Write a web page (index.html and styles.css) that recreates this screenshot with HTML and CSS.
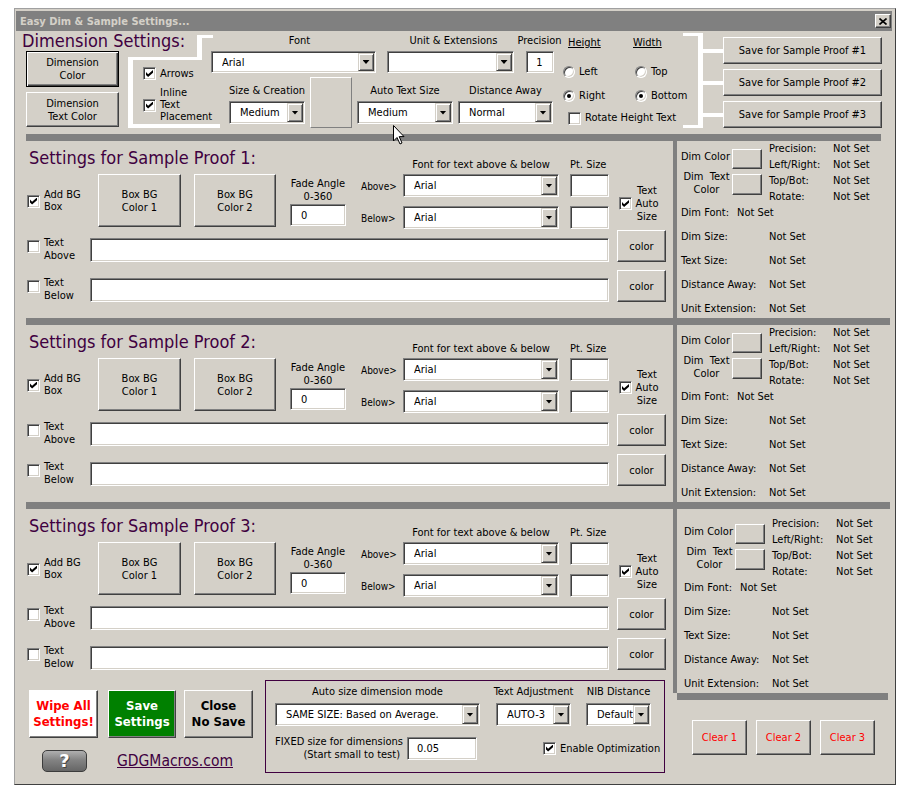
FILE: index.html
```html
<!DOCTYPE html>
<html lang="en">
<head>
<meta charset="UTF-8">
<title>Easy Dim &amp; Sample Settings...</title>
<link rel="stylesheet" href="styles.css">
</head>
<body>
<div class="window">
    <!-- title bar -->
    <div class="titlebar">
        <span class="title">Easy Dim &amp; Sample Settings...</span>
        <span class="btn close-btn"><svg width="8" height="7" viewBox="0 0 8 7"><path d="M0.5 0.5 L7.5 6.5 M7.5 0.5 L0.5 6.5" stroke="#000" stroke-width="1.6"/></svg></span>
    </div>

    <!-- ==========  DIMENSION SETTINGS  ========== -->
    <section class="dim-settings">
        <div class="dim-left">
            <h1 class="heading">Dimension Settings:</h1>
            <div class="dim-left-row">
                <div class="color-btns">
                    <div class="btn btn-def dim-btn">Dimension<br>Color</div>
                    <div class="btn dim-btn2">Dimension<br>Text Color</div>
                </div>
                <div class="check-bracket">
                    <div class="chk chk-arrows"><span class="cb on"></span><span>Arrows</span></div>
                    <div class="chk chk-inline"><span class="cb on"></span><span class="lbl3">Inline<br>Text<br>Placement</span></div>
                </div>
            </div>
        </div>

        <div class="dim-mid">
            <div class="mid-row1">
                <div class="grp font-grp">
                    <div class="hdr">Font</div>
                    <div class="field combo h22"><span class="val">Arial</span><span class="drop"></span></div>
                </div>
                <div class="grp unit-grp">
                    <div class="hdr">Unit &amp; Extensions</div>
                    <div class="field combo h22"><span class="val"></span><span class="drop"></span></div>
                </div>
                <div class="grp prec-grp">
                    <div class="hdr">Precision</div>
                    <div class="field prec-in">1</div>
                </div>
            </div>
            <div class="mid-row2">
                <div class="grp size-grp">
                    <div class="hdr">Size &amp; Creation</div>
                    <div class="field combo h23"><span class="val">Medium</span><span class="drop"></span></div>
                </div>
                <div class="preview-box"></div>
                <div class="grp auto-grp">
                    <div class="hdr">Auto Text Size</div>
                    <div class="field combo h23"><span class="val">Medium</span><span class="drop"></span></div>
                </div>
                <div class="grp dist-grp">
                    <div class="hdr">Distance Away</div>
                    <div class="field combo h23"><span class="val">Normal</span><span class="drop"></span></div>
                </div>
            </div>
        </div>

        <div class="hw">
            <div class="hw-h">Height</div>
            <div class="hw-h hw-w">Width</div>
            <div class="radio r1"><span class="rb"></span>Left</div>
            <div class="radio r1"><span class="rb"></span>Top</div>
            <div class="radio r2"><span class="rb on"></span>Right</div>
            <div class="radio r2"><span class="rb on"></span>Bottom</div>
            <div class="chk rotate"><span class="cb"></span>Rotate Height Text</div>
        </div>

        <div class="save-grp">
            <div class="bracket">
                <div class="btn save-btn">Save for Sample Proof #1</div>
                <div class="btn save-btn">Save for Sample Proof #2</div>
                <div class="btn save-btn">Save for Sample Proof #3</div>
            </div>
        </div>
    </section>

    <div class="bar"></div>

    <!-- ==========  SAMPLE PROOF 1  ========== -->
    <section class="proof">
        <div class="proof-left">
            <div class="proof-head">
                <h2 class="proof-title">Settings for Sample Proof 1:</h2>
                <div class="font-hdr">Font for text above &amp; below</div>
                <div class="pt-hdr">Pt. Size</div>
            </div>
            <div class="proof-ctrl">
                <div class="addbg"><span class="cb on"></span><span class="lbl2">Add BG<br>Box</span></div>
                <div class="btn box-btn">Box BG<br>Color 1</div>
                <div class="btn box-btn box2">Box BG<br>Color 2</div>
                <div class="fade"><div class="fade-lbl">Fade Angle<br>0-360</div><div class="field fade-in">0</div></div>
                <div class="ab-lbls"><span>Above&gt;</span><span>Below&gt;</span></div>
                <div class="ab-combos">
                    <div class="field combo h23"><span class="val">Arial</span><span class="drop"></span></div>
                    <div class="field combo h23"><span class="val">Arial</span><span class="drop"></span></div>
                </div>
                <div class="pt-ins"><div class="field pt-in"></div><div class="field pt-in"></div></div>
                <div class="autosize"><span class="cb on"></span><span class="lbl-c">Text<br>Auto<br>Size</span></div>
            </div>
            <div class="text-row">
                <div class="tchk"><span class="cb"></span><span>Text<br>Above</span></div>
                <div class="field text-in"></div>
                <div class="btn color-btn">color</div>
            </div>
            <div class="text-row">
                <div class="tchk"><span class="cb"></span><span>Text<br>Below</span></div>
                <div class="field text-in"></div>
                <div class="btn color-btn">color</div>
            </div>
        </div>
        <div class="proof-right">
            <div class="rp-top">
                <div class="rp-swatches">
                    <div class="sw-row sw1"><span class="sw-lbl">Dim Color</span><span class="btn swatch"></span></div>
                    <div class="sw-row sw2"><span class="sw-lbl">Dim&nbsp; Text<br>Color</span><span class="btn swatch swatch2"></span></div>
                </div>
                <div class="rp-info">
                    <div><span class="k">Precision:</span>Not Set</div>
                    <div><span class="k">Left/Right:</span>Not Set</div>
                    <div><span class="k">Top/Bot:</span>Not Set</div>
                    <div><span class="k">Rotate:</span>Not Set</div>
                </div>
            </div>
            <div class="rp-font"><span class="k">Dim Font:</span>Not Set</div>
            <div class="rp-rows">
                <div><span class="k">Dim Size:</span>Not Set</div>
                <div><span class="k">Text Size:</span>Not Set</div>
                <div><span class="k">Distance Away:</span>Not Set</div>
                <div><span class="k">Unit Extension:</span>Not Set</div>
            </div>
        </div>
    </section>

    <div class="bar bar-wide"></div>

    <!-- ==========  SAMPLE PROOF 2  ========== -->
    <section class="proof">
        <div class="proof-left">
            <div class="proof-head">
                <h2 class="proof-title">Settings for Sample Proof 2:</h2>
                <div class="font-hdr">Font for text above &amp; below</div>
                <div class="pt-hdr">Pt. Size</div>
            </div>
            <div class="proof-ctrl">
                <div class="addbg"><span class="cb on"></span><span class="lbl2">Add BG<br>Box</span></div>
                <div class="btn box-btn">Box BG<br>Color 1</div>
                <div class="btn box-btn box2">Box BG<br>Color 2</div>
                <div class="fade"><div class="fade-lbl">Fade Angle<br>0-360</div><div class="field fade-in">0</div></div>
                <div class="ab-lbls"><span>Above&gt;</span><span>Below&gt;</span></div>
                <div class="ab-combos">
                    <div class="field combo h23"><span class="val">Arial</span><span class="drop"></span></div>
                    <div class="field combo h23"><span class="val">Arial</span><span class="drop"></span></div>
                </div>
                <div class="pt-ins"><div class="field pt-in"></div><div class="field pt-in"></div></div>
                <div class="autosize"><span class="cb on"></span><span class="lbl-c">Text<br>Auto<br>Size</span></div>
            </div>
            <div class="text-row">
                <div class="tchk"><span class="cb"></span><span>Text<br>Above</span></div>
                <div class="field text-in"></div>
                <div class="btn color-btn">color</div>
            </div>
            <div class="text-row">
                <div class="tchk"><span class="cb"></span><span>Text<br>Below</span></div>
                <div class="field text-in"></div>
                <div class="btn color-btn">color</div>
            </div>
        </div>
        <div class="proof-right">
            <div class="rp-top">
                <div class="rp-swatches">
                    <div class="sw-row sw1"><span class="sw-lbl">Dim Color</span><span class="btn swatch"></span></div>
                    <div class="sw-row sw2"><span class="sw-lbl">Dim&nbsp; Text<br>Color</span><span class="btn swatch swatch2"></span></div>
                </div>
                <div class="rp-info">
                    <div><span class="k">Precision:</span>Not Set</div>
                    <div><span class="k">Left/Right:</span>Not Set</div>
                    <div><span class="k">Top/Bot:</span>Not Set</div>
                    <div><span class="k">Rotate:</span>Not Set</div>
                </div>
            </div>
            <div class="rp-font"><span class="k">Dim Font:</span>Not Set</div>
            <div class="rp-rows">
                <div><span class="k">Dim Size:</span>Not Set</div>
                <div><span class="k">Text Size:</span>Not Set</div>
                <div><span class="k">Distance Away:</span>Not Set</div>
                <div><span class="k">Unit Extension:</span>Not Set</div>
            </div>
        </div>
    </section>

    <div class="bar bar-wide"></div>

    <!-- ==========  SAMPLE PROOF 3 + BOTTOM  ========== -->
    <section class="lower">
        <div class="lower-left">
            <div class="proof-left">
                <div class="proof-head">
                    <h2 class="proof-title">Settings for Sample Proof 3:</h2>
                    <div class="font-hdr">Font for text above &amp; below</div>
                    <div class="pt-hdr">Pt. Size</div>
                </div>
                <div class="proof-ctrl">
                    <div class="addbg"><span class="cb on"></span><span class="lbl2">Add BG<br>Box</span></div>
                    <div class="btn box-btn">Box BG<br>Color 1</div>
                    <div class="btn box-btn box2">Box BG<br>Color 2</div>
                    <div class="fade"><div class="fade-lbl">Fade Angle<br>0-360</div><div class="field fade-in">0</div></div>
                    <div class="ab-lbls"><span>Above&gt;</span><span>Below&gt;</span></div>
                    <div class="ab-combos">
                        <div class="field combo h23"><span class="val">Arial</span><span class="drop"></span></div>
                        <div class="field combo h23"><span class="val">Arial</span><span class="drop"></span></div>
                    </div>
                    <div class="pt-ins"><div class="field pt-in"></div><div class="field pt-in"></div></div>
                    <div class="autosize"><span class="cb on"></span><span class="lbl-c">Text<br>Auto<br>Size</span></div>
                </div>
                <div class="text-row">
                    <div class="tchk"><span class="cb"></span><span>Text<br>Above</span></div>
                    <div class="field text-in"></div>
                    <div class="btn color-btn">color</div>
                </div>
                <div class="text-row">
                    <div class="tchk"><span class="cb"></span><span>Text<br>Below</span></div>
                    <div class="field text-in"></div>
                    <div class="btn color-btn">color</div>
                </div>
            </div>

            <div class="bottom">
                <div class="bl">
                    <div class="big-btns">
                        <div class="btn big wipe">Wipe All<br>Settings!</div>
                        <div class="btn big save">Save<br>Settings</div>
                        <div class="btn big close">Close<br>No Save</div>
                    </div>
                    <div class="help-row">
                        <div class="help">?</div>
                        <span class="link">GDGMacros.com</span>
                    </div>
                </div>
                <div class="opts">
                    <div class="opts-row1">
                        <div class="grp og-auto">
                            <div class="hdr">Auto size dimension mode</div>
                            <div class="field combo h23"><span class="val">SAME SIZE: Based on Average.</span><span class="drop"></span></div>
                        </div>
                        <div class="grp og-adj">
                            <div class="hdr">Text Adjustment</div>
                            <div class="field combo h23"><span class="val">AUTO-3</span><span class="drop"></span></div>
                        </div>
                        <div class="grp og-nib">
                            <div class="hdr">NIB Distance</div>
                            <div class="field combo h23"><span class="val">Default</span><span class="drop"></span></div>
                        </div>
                    </div>
                    <div class="opts-row2">
                        <div class="fixed-lbl">FIXED size for dimensions<br>(Start small to test)</div>
                        <div class="field fixed-in">0.05</div>
                        <div class="chk opt-chk"><span class="cb on"></span>Enable Optimization</div>
                    </div>
                </div>
            </div>
        </div>

        <div class="lower-right">
            <div class="proof-right">
                <div class="rp-top">
                    <div class="rp-swatches">
                        <div class="sw-row sw1"><span class="sw-lbl">Dim Color</span><span class="btn swatch"></span></div>
                        <div class="sw-row sw2"><span class="sw-lbl">Dim&nbsp; Text<br>Color</span><span class="btn swatch swatch2"></span></div>
                    </div>
                    <div class="rp-info">
                        <div><span class="k">Precision:</span>Not Set</div>
                        <div><span class="k">Left/Right:</span>Not Set</div>
                        <div><span class="k">Top/Bot:</span>Not Set</div>
                        <div><span class="k">Rotate:</span>Not Set</div>
                    </div>
                </div>
                <div class="rp-font"><span class="k">Dim Font:</span>Not Set</div>
                <div class="rp-rows">
                    <div><span class="k">Dim Size:</span>Not Set</div>
                    <div><span class="k">Text Size:</span>Not Set</div>
                    <div><span class="k">Distance Away:</span>Not Set</div>
                    <div><span class="k">Unit Extension:</span>Not Set</div>
                </div>
            </div>
            <div class="bar-r"></div>
            <div class="clears">
                <div class="btn clear-btn">Clear 1</div>
                <div class="btn clear-btn">Clear 2</div>
                <div class="btn clear-btn">Clear 3</div>
            </div>
        </div>
    </section>

    <!-- mouse pointer caught in the screenshot -->
    <svg class="cursor" width="12" height="20" viewBox="0 0 12 20"><path d="M0.5 0.5 V16 L4 12.5 L7 19 L9 18 L6.2 11.6 H11 Z" fill="#fff" stroke="#000" stroke-width="1"/></svg>
</div>
</body>
</html>
```

FILE: styles.css
```css
/* ========  BASE  ======== */
*, *::before, *::after { box-sizing: border-box; margin: 0; padding: 0; }
:root {
    --face: #d4d0c8;
    --shadow: #808080;
    --dark: #404040;
    --purple: #400040;
}
body {
    background: #fff;
    font-family: "DejaVu Sans Condensed", "DejaVu Sans", sans-serif;
    font-size: 11px;
    line-height: 13px;
    color: #000;
}

/* ========  WINDOW FRAME  ======== */
.window {
    position: relative;
    margin: 8px 0 0 14px;
    width: 882px;
    background: var(--face);
    border: 1px solid;
    border-color: #a0a0a0 var(--dark) var(--dark) #a0a0a0;
    padding: 2px 3px 0 1px;
}
.titlebar {
    height: 20px;
    background: #808080;
    display: flex;
    align-items: center;
    justify-content: space-between;
    padding: 0 1px 0 4px;
}
.title { color: #d4d0c8; font-weight: bold; }
.close-btn { width: 16px; height: 14px; }

/* ========  CLASSIC CONTROLS  ======== */
.btn {
    display: flex;
    align-items: center;
    justify-content: center;
    text-align: center;
    flex: none;
    background: var(--face);
    border: 1px solid;
    border-color: #fff var(--dark) var(--dark) #fff;
    box-shadow: inset -1px -1px var(--shadow);
}
.btn-def {
    border-color: #000;
    box-shadow: inset 1px 1px #fff, inset -1px -1px var(--dark), inset -2px -2px var(--shadow);
}
.field {
    flex: none;
    background: #fff;
    border: 1px solid;
    border-color: var(--shadow) #fff #fff var(--shadow);
    box-shadow: inset 1px 1px var(--dark), inset -1px -1px var(--face);
}
.combo {
    display: flex;
    align-items: center;
    padding: 1px 1px 1px 10px;
    white-space: nowrap;
}
.combo .val { flex: 1; overflow: hidden; }
.h22 { height: 22px; }
.h23 { height: 23px; }
.drop {
    align-self: stretch;
    width: 16px;
    flex: none;
    display: flex;
    align-items: center;
    justify-content: center;
    background: var(--face);
    border: 1px solid;
    border-color: var(--face) var(--dark) var(--dark) var(--face);
    box-shadow: inset 1px 1px #fff, inset -1px -1px var(--shadow);
}
.drop::after {
    content: "";
    width: 7px;
    height: 4px;
    background: #000;
    clip-path: polygon(0 0, 100% 0, 50% 100%);
}

.cb {
    position: relative;
    flex: none;
    width: 13px;
    height: 13px;
    background: #fff;
    border: 1px solid;
    border-color: var(--shadow) #fff #fff var(--shadow);
    box-shadow: inset 1px 1px var(--dark), inset -1px -1px var(--face);
}
.cb.on::after {
    content: "";
    position: absolute;
    left: 2px;
    top: 2px;
    width: 7px;
    height: 7px;
    background: #000;
    clip-path: polygon(0 30%, 30% 60%, 100% 0, 100% 40%, 30% 100%, 0 70%);
}
.rb {
    position: relative;
    flex: none;
    width: 12px;
    height: 12px;
    border-radius: 50%;
    background: #fff;
    border: 1px solid;
    border-color: var(--shadow) #fff #fff var(--shadow);
    box-shadow: inset 1px 1px var(--dark), inset -1px -1px var(--face);
}
.rb.on::after {
    content: "";
    position: absolute;
    left: 3px;
    top: 3px;
    width: 4px;
    height: 4px;
    border-radius: 50%;
    background: #000;
}
.chk { display: flex; align-items: center; gap: 4px; white-space: nowrap; }

/* ========  DIMENSION SETTINGS  ======== */
.dim-settings { display: flex; height: 103px; }
.dim-left { width: 195px; flex: none; }
.heading {
    font-size: 18px;
    line-height: 20px;
    font-weight: normal;
    color: var(--purple);
    padding-left: 6px;
    white-space: nowrap;
}
.dim-left-row { display: flex; }
.color-btns {
    margin-left: 10px;
    width: 93px;
    flex: none;
    display: flex;
    flex-direction: column;
    gap: 5px;
}
.dim-btn { height: 36px; }
.dim-btn2 { height: 35px; }

.check-bracket {
    position: relative;
    flex: none;
    margin: 6px 0 0 9px;
    width: 92px;
    height: 71px;
    border-left: 5px solid #fff;
    border-bottom: 4px solid #fff;
    padding: 3px 0 0 10px;
}
.check-bracket::after {
    content: "";
    position: absolute;
    left: -5px;
    top: 0;
    width: 74px;
    height: 3px;
    background: #fff;
}
.check-bracket::before {
    content: "";
    position: absolute;
    left: 64px;
    top: -22px;
    width: 16px;
    height: 25px;
    border-left: 5px solid #fff;
    border-top: 3px solid #fff;
}
.chk-arrows { margin-top: 7px; }
.chk-inline { margin-top: 7px; }
.lbl3 { line-height: 12px; }

.dim-mid { width: 342px; flex: none; padding-top: 3px; }
.mid-row1, .mid-row2 { display: flex; align-items: flex-start; }
.grp { display: flex; flex-direction: column; align-items: center; flex: none; }
.grp .hdr { line-height: 14px; margin-bottom: 3px; white-space: nowrap; }
.grp .combo { align-self: stretch; }
.font-grp { width: 165px; }
.font-grp .hdr { padding-left: 12px; }
.unit-grp { width: 127px; margin-left: 11px; }
.unit-grp .hdr { padding-left: 6px; }
.prec-grp { width: 43px; margin-left: 4px; }
.prec-in {
    width: 28px;
    height: 22px;
    display: flex;
    align-items: center;
    justify-content: center;
}
.mid-row2 { margin-top: 4px; padding-left: 18px; gap: 5px; }
.size-grp { width: 76px; margin-top: 7px; }
.auto-grp { width: 96px; margin-top: 7px; }
.dist-grp { width: 95px; margin-top: 7px; }
.preview-box {
    width: 42px;
    height: 51px;
    flex: none;
    border: 1px solid;
    border-color: #fff var(--shadow) var(--shadow) #fff;
}

.hw {
    margin-left: 7px;
    width: 120px;
    flex: none;
    padding-top: 5px;
    display: grid;
    grid-template-columns: 72px 48px;
    align-content: start;
}
.hw-h { line-height: 14px; text-decoration: underline; padding-left: 8px; }
.hw-w { padding-left: 1px; }
.radio { display: flex; align-items: center; gap: 4px; line-height: 14px; margin-left: 3px; }
.r1 { margin-top: 15px; }
.r2 { margin-top: 10px; }
.rotate { grid-column: 1 / 3; margin-top: 8px; padding-left: 8px; line-height: 14px; }

.save-grp { margin-left: 3px; padding: 2px 0 0 15px; flex: none; }
.bracket {
    position: relative;
    height: 95px;
    border-left: 5px solid #fff;
    padding: 4px 0 0 20px;
    display: flex;
    flex-direction: column;
    gap: 5px;
}
.bracket::before, .bracket::after {
    content: "";
    position: absolute;
    left: -20px;
    width: 20px;
    height: 3px;
    background: #fff;
}
.bracket::before { top: 0; }
.bracket::after { bottom: 0; }
.save-btn { position: relative; width: 159px; height: 27px; }
.save-btn::before {
    content: "";
    position: absolute;
    left: -21px;
    top: 50%;
    margin-top: -2px;
    width: 20px;
    height: 4px;
    background: #fff;
}

/* ========  SEPARATOR BARS  ======== */
.bar { height: 7px; margin-left: 10px; width: 855px; background: #808080; }
.bar-wide { width: 864px; }

/* ========  SAMPLE PROOF SECTIONS  ======== */
.proof { display: flex; height: 177px; }
.proof-left { width: 657px; flex: none; padding-left: 11px; height: 177px; }
.proof-head { display: flex; height: 31px; }
.proof-title {
    width: 376px;
    flex: none;
    padding-left: 2px;
    margin-top: 7px;
    font-size: 18px;
    line-height: 20px;
    font-weight: normal;
    color: var(--purple);
    white-space: nowrap;
}
.font-hdr { width: 156px; flex: none; text-align: center; line-height: 14px; align-self: flex-end; white-space: nowrap; }
.pt-hdr { width: 39px; flex: none; margin-left: 11px; line-height: 14px; align-self: flex-end; white-space: nowrap; }

.proof-ctrl { display: flex; align-items: flex-start; height: 58px; }
.addbg { width: 71px; flex: none; display: flex; align-items: center; gap: 4px; margin-top: 17px; }
.lbl2 { line-height: 12px; }
.box-btn { width: 83px; height: 53px; margin-top: 2px; }
.box2 { width: 82px; margin-left: 13px; }
.fade { width: 56px; flex: none; margin: 5px 0 0 14px; text-align: center; }
.fade-in {
    margin-top: 1px;
    height: 22px;
    padding-left: 10px;
    display: flex;
    align-items: center;
    text-align: left;
}
.ab-lbls {
    width: 42px;
    flex: none;
    margin: 3px 0 0 15px;
    display: flex;
    flex-direction: column;
    gap: 9px;
    font-size: 10px;
}
.ab-lbls span { line-height: 23px; }
.ab-combos { width: 156px; flex: none; margin-top: 2px; display: flex; flex-direction: column; gap: 9px; }
.pt-ins { width: 39px; flex: none; margin: 2px 0 0 11px; display: flex; flex-direction: column; gap: 9px; }
.pt-in { height: 23px; }
.autosize { width: 49px; flex: none; margin: 12px 0 0 8px; padding-left: 2px; display: flex; align-items: center; gap: 2px; }
.lbl-c { width: 26px; text-align: center; }

.text-row { display: flex; align-items: flex-end; height: 32px; }
.text-row + .text-row { margin-top: 8px; }
.tchk { width: 63px; flex: none; display: flex; gap: 4px; align-items: flex-start; }
.tchk .cb { margin-top: 4px; }
.text-in { width: 519px; height: 24px; }
.color-btn { width: 49px; height: 32px; margin-left: 8px; }

/* right summary panel */
.proof-right { flex: 1; border-left: 4px solid #808080; padding-left: 4px; }
.rp-top { display: flex; }
.rp-swatches { width: 88px; flex: none; }
.sw-row { display: flex; align-items: flex-start; }
.sw1 { margin-top: 8px; }
.sw2 { margin-top: 1px; }
.sw-lbl { width: 51px; flex: none; }
.sw1 .sw-lbl { margin-top: 1px; }
.sw2 .sw-lbl { text-align: center; }
.swatch { width: 30px; height: 20px; }
.swatch2 { height: 21px; margin-top: 4px; }
.rp-info { line-height: 16px; white-space: nowrap; }
.rp-info .k { display: inline-block; width: 64px; }
.rp-font { line-height: 16px; white-space: nowrap; }
.rp-font .k { display: inline-block; width: 56px; }
.rp-rows { margin-top: 8px; display: flex; flex-direction: column; gap: 8px; line-height: 16px; white-space: nowrap; }
.rp-rows .k { display: inline-block; width: 88px; }

/* ========  PROOF 3 + BOTTOM  ======== */
.lower { display: flex; }
.lower-left { width: 657px; flex: none; }
.lower-left .proof-left { height: 171px; }
.lower-right { flex: 1; }
.lower-right .proof-right { height: 184px; padding: 7px 0 0 7px; }
.bar-r { height: 7px; margin-left: 4px; width: 211px; background: #808080; }
.clears { display: flex; gap: 9px; padding: 20px 0 0 19px; }
.clear-btn { width: 55px; height: 35px; color: #f00; }

.bottom { display: flex; height: 104px; }
.bl { width: 237px; flex: none; padding: 10px 0 0 13px; }
.big-btns { display: flex; }
.big {
    width: 69px;
    height: 48px;
    font-weight: bold;
    font-size: 13px;
    line-height: 16px;
}
.wipe { background: #fff; color: #f00; }
.save { background: #008000; color: #fff; width: 68px; margin-left: 10px; }
.close { margin-left: 8px; }
.help-row { display: flex; align-items: center; margin-top: 12px; }
.help {
    margin-left: 13px;
    width: 45px;
    height: 22px;
    flex: none;
    border-radius: 5px;
    border: 1px solid #3c3c3c;
    background: linear-gradient(#b0b0b0, #838383 45%, #666);
    color: #fff;
    font-family: "DejaVu Sans", sans-serif;
    font-weight: bold;
    font-size: 18px;
    line-height: 20px;
    text-align: center;
    text-shadow: 1px 1px #444;
}
.link {
    margin-left: 30px;
    font-size: 15.5px;
    line-height: 18px;
    color: var(--purple);
    text-decoration: underline;
}

.opts {
    margin-left: 12px;
    width: 400px;
    height: 93px;
    flex: none;
    border: 1px solid var(--purple);
    padding: 4px 0 0 9px;
}
.opts-row1 { display: flex; align-items: flex-start; }
.opts .grp .hdr { margin-bottom: 4px; }
.og-auto { width: 205px; }
.og-adj { width: 75px; margin-left: 16px; }
.og-nib { width: 65px; margin-left: 15px; }
.opts-row2 { display: flex; align-items: center; margin-top: 9px; }
.fixed-lbl { width: 125px; flex: none; text-align: right; white-space: nowrap; }
.fixed-in {
    margin-left: 7px;
    width: 70px;
    height: 23px;
    padding-left: 9px;
    display: flex;
    align-items: center;
}
.opt-chk { margin-left: 66px; }

/* pointer overlay */
.cursor { position: absolute; left: 378px; top: 116px; }
```
